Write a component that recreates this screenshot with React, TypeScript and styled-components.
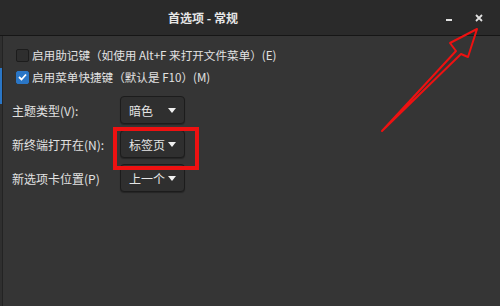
import React from 'react';
import styled, { createGlobalStyle } from 'styled-components';

const GlobalStyle = createGlobalStyle`
  html, body {
    margin: 0;
    padding: 0;
    background: #353535;
  }
  body {
    font-family: "Noto Sans CJK SC", "Noto Sans", sans-serif;
    color: #e2e2e2;
  }
`;

const Window = styled.div`
  position: relative;
  width: 500px;
  height: 306px;
  overflow: hidden;
  display: flex;
  flex-direction: column;
  background: #353535;
`;

const HeaderBar = styled.header`
  height: 35px;
  flex: none;
  display: flex;
  align-items: center;
  background: #2a2a2a;
  border-bottom: 1px solid #161616;
  padding-left: 168px;
  padding-right: 10px;

  .title {
    font-size: 12px;
    font-weight: 700;
    color: #e6e6e6;
    flex: 1;
  }
`;

const WinButton = styled.button<{ $gap?: number }>`
  width: 22px;
  height: 22px;
  padding: 0;
  border: none;
  background: transparent;
  display: flex;
  align-items: center;
  justify-content: center;
  margin-left: ${(p) => p.$gap ?? 0}px;
`;

const Body = styled.div`
  flex: 1;
  display: flex;
`;

const SideEdge = styled.div`
  width: 2px;
  flex: none;
  border-right: 1px solid #232323;
  background: #2f2f2f;
  padding-top: 32px;

  .active {
    height: 36px;
    background: #2a76c6;
  }
`;

const Content = styled.section`
  flex: 1;
  padding: 8px 0 0 9px;
  font-size: 12px;
`;

const CheckRow = styled.label`
  display: flex;
  align-items: center;
  gap: 3px;
  height: 22px;
  margin-left: 4px;
  font-size: 11.6px;
`;

const Box = styled.span<{ $checked?: boolean }>`
  width: 11px;
  height: 11px;
  border-radius: 2px;
  display: flex;
  align-items: center;
  justify-content: center;
  background: ${(p) => (p.$checked ? '#2a76c6' : '#2e2e2e')};
  border: 1px solid ${(p) => (p.$checked ? '#2a76c6' : '#1c1c1c')};
`;

const Form = styled.div`
  margin-top: 8px;
  display: grid;
  grid-template-columns: 108px 65px;
  row-gap: 6px;
  align-items: center;
`;

const Label = styled.span`
  color: #e2e2e2;
`;

const Select = styled.div`
  height: 28px;
  box-sizing: border-box;
  border: 1px solid #1c1c1c;
  border-radius: 4px;
  background: #2f2f2f;
  display: flex;
  align-items: center;
  justify-content: space-between;
  padding: 0 8px;
  box-shadow: 0 1px 1px rgba(0, 0, 0, 0.3);
  color: #e6e6e6;
`;

const Caret = () => (
  <svg width="8" height="5" viewBox="0 0 8 5">
    <path d="M0 0 H8 L4 5 Z" fill="#f0f0f0" />
  </svg>
);

const Highlight = styled.div`
  position: absolute;
  left: 113px;
  top: 127px;
  width: 86px;
  height: 43px;
  box-sizing: border-box;
  border: 4px solid #ee1111;
  pointer-events: none;
`;

const Overlay = styled.svg`
  position: absolute;
  left: 0;
  top: 0;
  pointer-events: none;
`;

const rows = [
  { label: '主题类型(V):', value: '暗色' },
  { label: '新终端打开在(N):', value: '标签页' },
  { label: '新选项卡位置(P)', value: '上一个' },
];

export default function App() {
  return (
    <Window>
      <GlobalStyle />
      <HeaderBar>
        <span className="title">首选项 - 常规</span>
        <WinButton aria-label="minimize">
          <svg width="8" height="8" viewBox="0 0 8 8">
            <rect x="1" y="5" width="6" height="2" fill="#e0e0e0" />
          </svg>
        </WinButton>
        <WinButton aria-label="close" $gap={8}>
          <svg width="8" height="8" viewBox="0 0 8 8">
            <path d="M1 1 L7 7 M7 1 L1 7" stroke="#e0e0e0" strokeWidth="1.8" />
          </svg>
        </WinButton>
      </HeaderBar>
      <Body>
        <SideEdge>
          <div className="active" />
        </SideEdge>
        <Content>
          <CheckRow>
            <Box />
            启用助记键（如使用 Alt+F 来打开文件菜单）(E)
          </CheckRow>
          <CheckRow>
            <Box $checked>
              <svg width="9" height="8" viewBox="0 0 9 8">
                <path d="M1 4 L3.5 6.5 L8 1.5" stroke="#fff" strokeWidth="1.8" fill="none" />
              </svg>
            </Box>
            启用菜单快捷键（默认是 F10）(M)
          </CheckRow>
          <Form>
            {rows.map((r) => (
              <React.Fragment key={r.label}>
                <Label>{r.label}</Label>
                <Select>
                  <span>{r.value}</span>
                  <Caret />
                </Select>
              </React.Fragment>
            ))}
          </Form>
        </Content>
      </Body>
      <Highlight />
      <Overlay width="500" height="306" viewBox="0 0 500 306">
        <polygon
          points="382,131 456,51 450,43 477,29 468,57 461,54 382,131"
          fill="none"
          stroke="#ee1111"
          strokeWidth="2"
          strokeLinejoin="round"
        />
      </Overlay>
    </Window>
  );
}
